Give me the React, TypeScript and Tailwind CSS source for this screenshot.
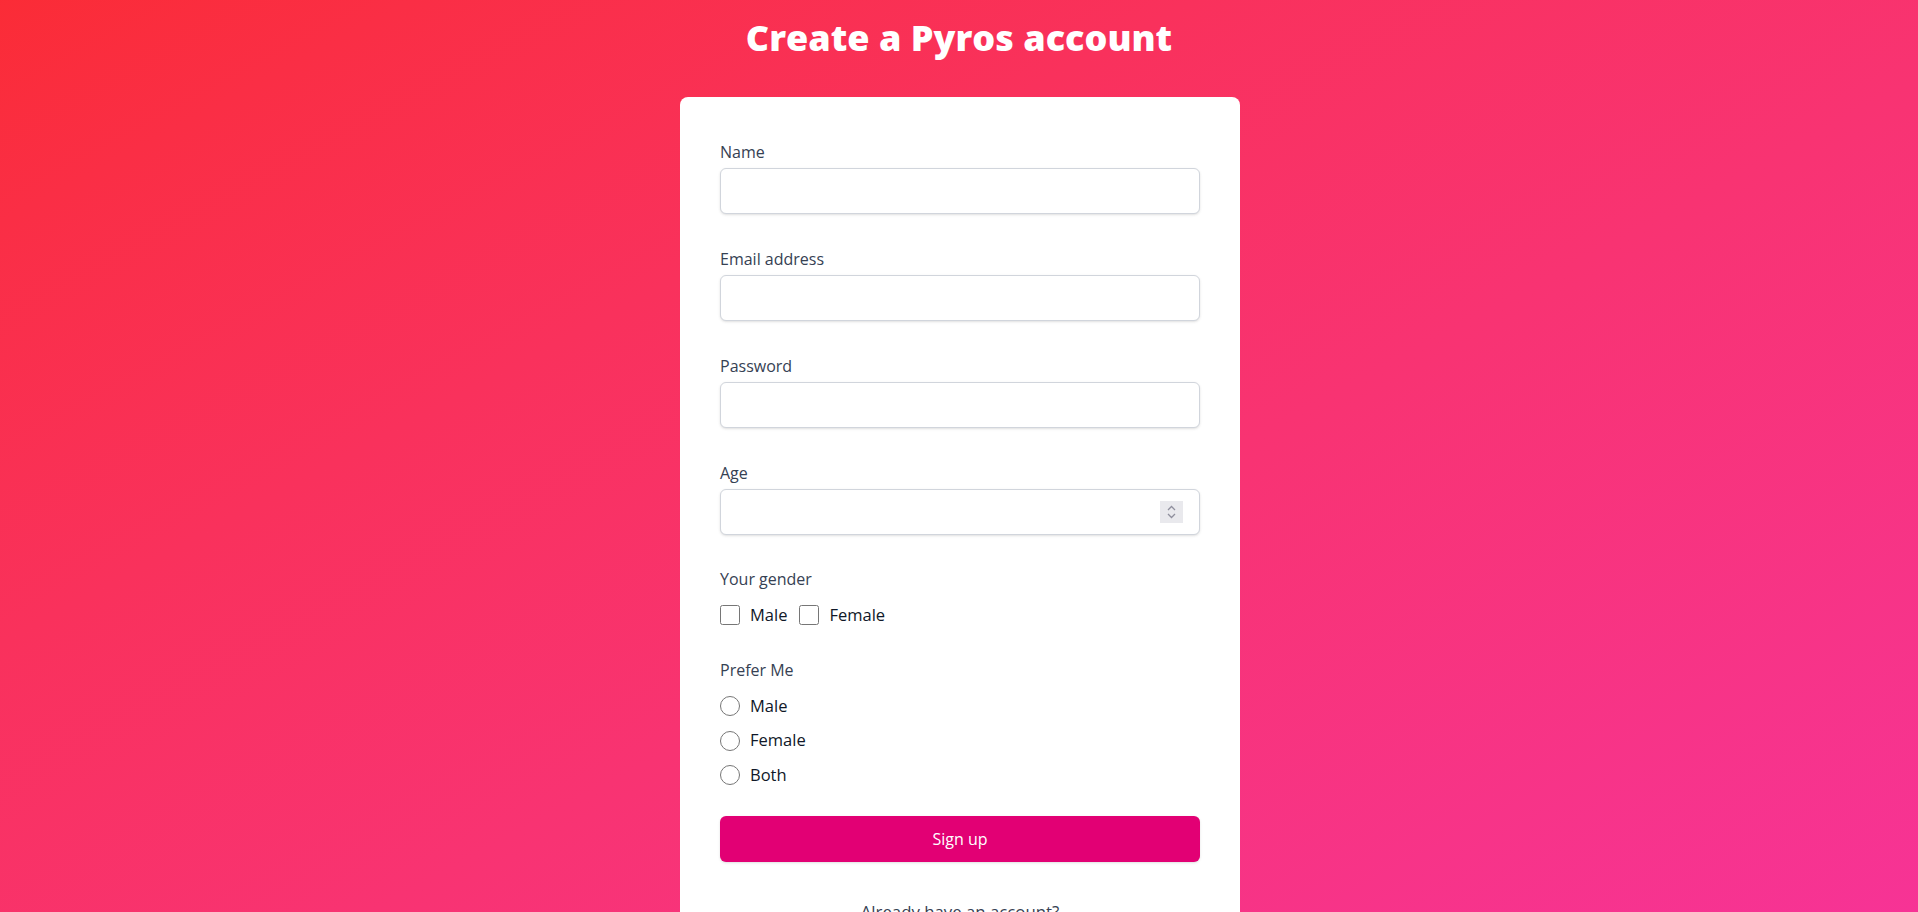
import { useState } from 'react';

function Field({ label, type, name }: { label: string; type: string; name: string }) {
  return (
    <div>
      <label htmlFor={name} className="block text-base leading-6 text-gray-700">
        {label}
      </label>
      <input
        id={name}
        name={name}
        type={type}
        className="mt-1 block h-[46px] w-full rounded-md border border-gray-300 bg-white px-3 text-base text-gray-900 shadow-sm outline-none"
      />
    </div>
  );
}

function AgeField() {
  return (
    <div>
      <label htmlFor="age" className="block text-base leading-6 text-gray-700">
        Age
      </label>
      {/* number input with its spin buttons drawn in the box */}
      <div className="mt-1 flex h-[46px] w-full items-center rounded-md border border-gray-300 bg-white pl-3 pr-4 shadow-sm">
        <input
          id="age"
          name="age"
          type="text"
          inputMode="numeric"
          className="h-full min-w-0 flex-1 bg-transparent text-base text-gray-900 outline-none"
        />
        <div className="flex h-[22px] w-[23px] flex-col items-center justify-center bg-[#e9e9ed]">
          <svg width="9" height="16" viewBox="0 0 9 16" fill="none" stroke="#8f8f9d" strokeWidth="1.3">
            <path d="M1 6 L4.5 2.5 L8 6" />
            <path d="M1 10 L4.5 13.5 L8 10" />
          </svg>
        </div>
      </div>
    </div>
  );
}

export default function App() {
  const [gender, setGender] = useState<string[]>([]);
  const [prefer, setPrefer] = useState('');

  const toggle = (g: string) =>
    setGender((prev) => (prev.includes(g) ? prev.filter((x) => x !== g) : [...prev, g]));

  return (
    <div className="min-h-screen w-full bg-gradient-to-br from-red-500 to-pink-500 pb-10 font-['Open_Sans',sans-serif]">
      <h2 className="pt-[18px] text-center text-[36px] font-extrabold leading-10 text-white">
        Create a Pyros account
      </h2>

      <div className="mx-auto mt-[39px] w-[560px] translate-x-[1px] rounded-lg bg-white px-10 pb-10 pt-[43px]">
        <form className="flex flex-col gap-[33px]" onSubmit={(e) => e.preventDefault()}>
          <Field label="Name" type="text" name="name" />
          <Field label="Email address" type="email" name="email" />
          <Field label="Password" type="password" name="password" />
          <AgeField />

          <div className="-mt-[1px]">
            <p className="text-base leading-6 text-gray-700">Your gender</p>
            <div className="mt-3 flex items-center gap-[12px]">
              {['Male', 'Female'].map((g) => (
                <label key={g} className="flex h-6 items-center text-[16.5px] text-gray-900">
                  <input
                    type="checkbox"
                    checked={gender.includes(g)}
                    onChange={() => toggle(g)}
                    className="m-0 h-5 w-5"
                  />
                  <span className="ml-[10px]">{g}</span>
                </label>
              ))}
            </div>
          </div>

          <div className="-mt-[2px]">
            <p className="text-base leading-6 text-gray-700">Prefer Me</p>
            <div className="mt-3 flex flex-col gap-[10.5px]">
              {['Male', 'Female', 'Both'].map((p) => (
                <label key={p} className="flex h-6 items-center text-[16.5px] text-gray-900">
                  <input
                    type="radio"
                    name="prefer"
                    checked={prefer === p}
                    onChange={() => setPrefer(p)}
                    className="m-0 h-5 w-5"
                  />
                  <span className="ml-[10px]">{p}</span>
                </label>
              ))}
            </div>
          </div>

          <button
            type="submit"
            className="-mt-[4px] h-[46px] w-full rounded-md bg-[#e20074] text-base text-white shadow-sm"
          >
            Sign up
          </button>
        </form>

        <div className="mt-[38px] text-center text-[16.8px] leading-6 text-gray-700">
          <p>Already have an account?</p>
          <a href="#" className="mt-1 inline-block font-semibold text-[#e20074]">
            Sign in
          </a>
        </div>
      </div>
    </div>
  );
}
